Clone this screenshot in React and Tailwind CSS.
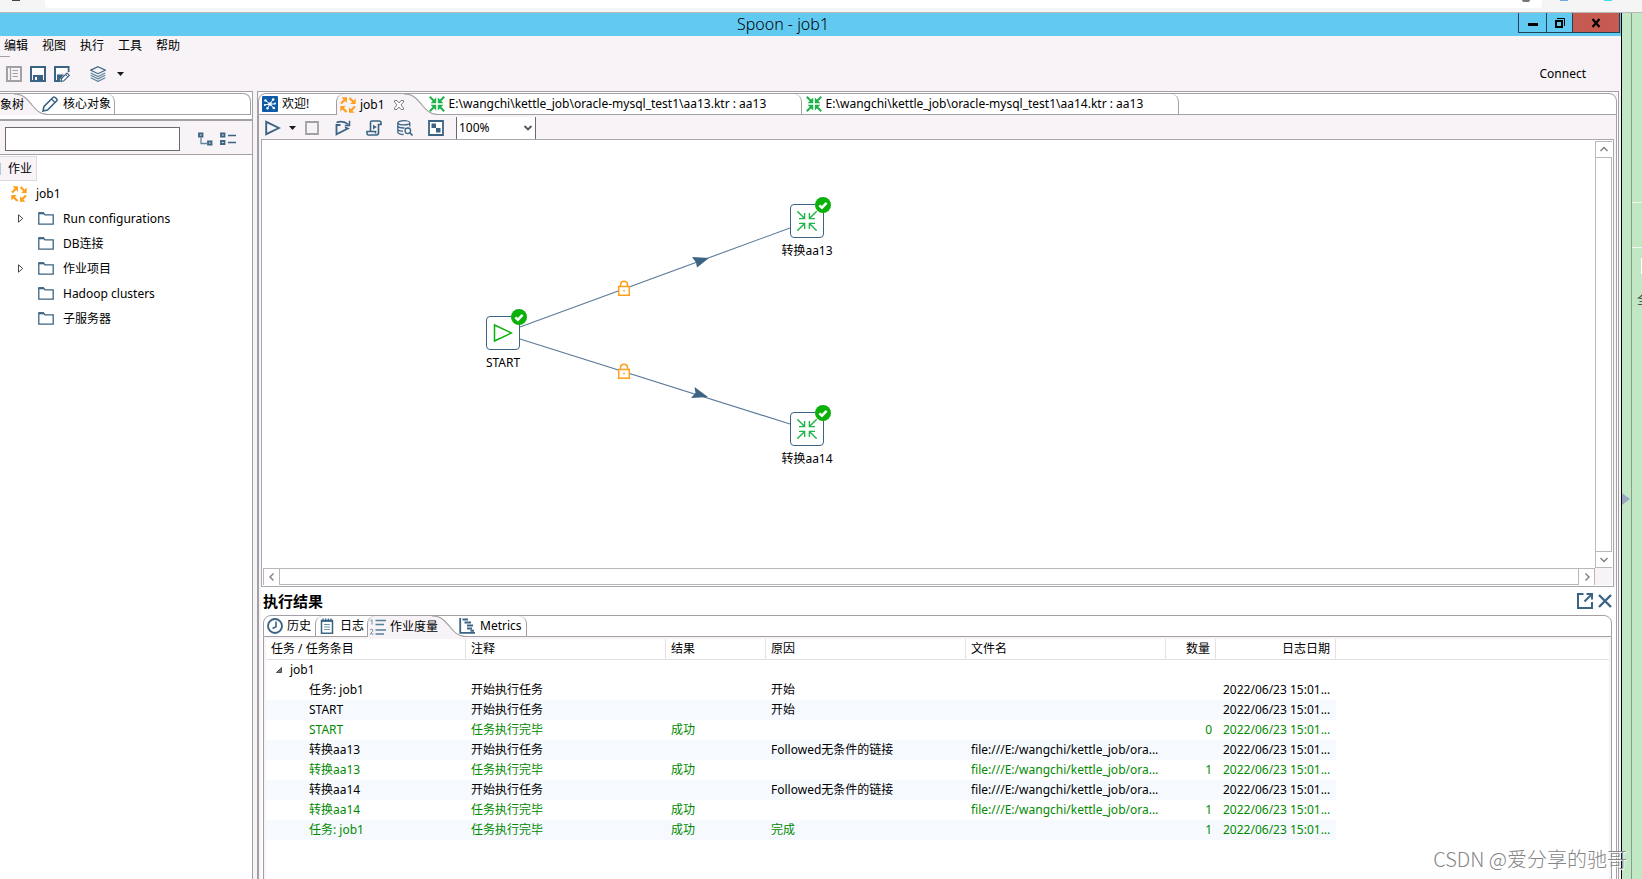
import React from "react";

const BLUE = "#3b6484";
const GREY = "#a2a0a5";

function Icon({ size = 16, children, className = "" }) {
  return (
    <svg
      width={size}
      height={size}
      viewBox={`0 0 ${size} ${size}`}
      fill="none"
      aria-hidden="true"
      className={`shrink-0 ${className}`}
    >
      {children}
    </svg>
  );
}

const quarterTurns = [0, 90, 180, 270];

function JobIcon() {
  return (
    <Icon>
      {quarterTurns.map((a) => (
        <g key={a} transform={`rotate(${a} 8 8)`}>
          <path d="M1 6.5L4.8 2.7" stroke="#ff9f1c" strokeWidth="2.2" />
          <path d="M1.5 0.3H7V5.8Z" fill="#ff9f1c" />
        </g>
      ))}
    </Icon>
  );
}

function TransIcon() {
  return (
    <Icon>
      {quarterTurns.map((a) => (
        <g key={a} transform={`rotate(${a} 8 8)`}>
          <path d="M0.8 0.8L5 5" stroke="#1fb24a" strokeWidth="2" />
          <path d="M7.2 1.5V7.2H1.5Z" fill="#1fb24a" />
        </g>
      ))}
    </Icon>
  );
}

function WelcomeIcon() {
  return (
    <Icon>
      <rect width="16" height="16" rx="1" fill="#0d5ba6" />
      <path d="M8 8L3.5 4.5M8 8L11 3.5M8 8L13 8M8 8L11.5 12M8 8L5.5 12M8 8L3 8.8" stroke="#fff" strokeWidth="1" />
      <g fill="#fff">
        <circle cx="8" cy="8" r="1.8" />
        <circle cx="3.5" cy="4.5" r="1.2" />
        <circle cx="11.2" cy="3.5" r="1.3" />
        <circle cx="13" cy="7.5" r="1" />
        <circle cx="11.8" cy="12" r="1.3" />
        <circle cx="5.5" cy="12.2" r="1.2" />
        <circle cx="2.8" cy="9" r="1" />
      </g>
    </Icon>
  );
}

const ExploreIcon = () => (
  <Icon>
    <path d="M1 1H15V15H1Z" stroke={GREY} strokeWidth="2" />
    <path d="M6.5 4.5H12M6.5 7.5H12M6.5 10.5H12M4.5 2V14" stroke={GREY} strokeWidth="1.2" />
  </Icon>
);

const SaveIcon = () => (
  <Icon>
    <path d="M1 1H15V15H1Z" stroke={BLUE} strokeWidth="2" />
    <path d="M2 2H14V8.5H2Z" fill="#fff" />
    <path d="M3 9H13V15H3Z" fill={BLUE} />
    <path d="M5 11H7V14H5Z" fill="#fff" />
  </Icon>
);

const SaveAsIcon = () => (
  <Icon>
    <path d="M14.5 6V1H1V15H6" stroke={BLUE} strokeWidth="2" />
    <path d="M2 2H13.5V7H2Z" fill="#fff" />
    <path d="M3 8.5H10L5 14.5H3Z" fill={BLUE} />
    <path d="M7.5 12.5L13 7L15.3 9.3L9.8 14.8L6.8 15.5Z" fill="#fff" stroke={BLUE} strokeWidth="1.2" />
    <path d="M11.5 8.5L13.8 10.8" stroke={BLUE} />
  </Icon>
);

const LayersIcon = () => (
  <Icon>
    <path d="M8 0.7L15.3 4.2L8 7.7L0.7 4.2Z" stroke={BLUE} strokeWidth="1.2" />
    <path d="M0.7 7L8 10.6L15.3 7M0.7 9.3L8 12.9L15.3 9.3M0.7 11.8L8 15.4L15.3 11.8" stroke="#6288a0" strokeWidth="1.2" />
  </Icon>
);

const PencilIcon = () => (
  <Icon>
    <path d="M1 15L2 10.5L11 1.5Q12 0.5 13.2 1.5L14.5 2.8Q15.5 4 14.5 5L5.5 14Z" fill="#fff" stroke={BLUE} strokeWidth="1.6" />
    <path d="M9.5 3L13 6.5" stroke={BLUE} strokeWidth="1.2" />
  </Icon>
);

const TreeExpandIcon = () => (
  <Icon>
    <path d="M1 2.5H4.5V5.5H1ZM10 10.5H13.5V13.5H10Z" stroke={BLUE} strokeWidth="1.8" />
    <path d="M3 6.5V12.5H9.5" stroke="#6288a0" strokeWidth="1.3" />
  </Icon>
);

const TreeCollapseIcon = () => (
  <Icon>
    <path d="M1 2.5H4.5V5.5H1ZM1 10H4.5V13H1Z" stroke={BLUE} strokeWidth="1.8" />
    <path d="M8 4.5H16M8 11.5H16" stroke={BLUE} strokeWidth="1.5" />
  </Icon>
);

const FolderIcon = () => (
  <Icon>
    <path d="M0.8 13.2V1.8H5.5L7 3.8H15.2V13.2Z" stroke={BLUE} strokeWidth="1.3" />
    <path d="M0.8 2.3H6" stroke={BLUE} strokeWidth="2" />
  </Icon>
);

const RunIcon = () => (
  <Icon>
    <path d="M1.2 1.8V14.2L14 8Z" stroke={BLUE} strokeWidth="1.9" />
  </Icon>
);

const StopIcon = () => (
  <Icon>
    <path d="M2 2H14V14H2Z" stroke={GREY} strokeWidth="1.8" />
  </Icon>
);

const ReplayIcon = () => (
  <Icon>
    <path d="M5.5 5H1.5V14.2L12.8 8.6L10 7.2" stroke={BLUE} strokeWidth="1.8" />
    <path d="M1.5 2.5Q8 0 13.5 4.5" stroke={BLUE} strokeWidth="1.6" />
    <path d="M14.5 0.8V5.4H9.8" stroke={BLUE} strokeWidth="1.5" />
  </Icon>
);

const ScriptIcon = () => (
  <Icon>
    <path d="M4.5 11V2.5Q4.5 1 6 1H13Q15 1 15 3V4.5H12.5V12.5Q12.5 15 10.5 15H2.5Q1 15 1 13V11.5H9.5V13.5" stroke={BLUE} strokeWidth="1.6" />
    <path d="M7 4.8V9.4L10.8 7.1Z" fill={BLUE} />
  </Icon>
);

const DbSearchIcon = () => (
  <Icon>
    <ellipse cx="6.8" cy="2.8" rx="6" ry="2.1" stroke={BLUE} strokeWidth="1.3" />
    <path d="M0.8 3V12.5Q2 14.5 6.5 14.5M12.8 3V6.5M0.8 6.5Q2.5 8.2 7.5 8M0.8 9.8Q2.5 11.3 6 11.2" stroke={BLUE} strokeWidth="1.3" />
    <circle cx="10.8" cy="10.8" r="2.8" stroke={BLUE} strokeWidth="1.3" />
    <path d="M12.8 12.8L15.5 15.5" stroke={BLUE} strokeWidth="1.6" />
  </Icon>
);

const ResultsIcon = () => (
  <Icon>
    <path d="M1 1H15V15H1Z" fill="#fff" stroke={BLUE} strokeWidth="1.8" />
    <path d="M3.5 3.5H8V8H3.5ZM8 8H12.5V12.5H8Z" fill={BLUE} />
  </Icon>
);

const HistoryIcon = () => (
  <Icon>
    <circle cx="8" cy="8" r="7" stroke={BLUE} strokeWidth="1.9" />
    <path d="M9 3.5V8.8L5.5 10.5" stroke={BLUE} strokeWidth="1.6" />
  </Icon>
);

const LogIcon = () => (
  <Icon>
    <path d="M2.5 2.5H13.5V15.2H2.5Z" fill="#fff" stroke={BLUE} strokeWidth="1.5" />
    <path d="M2.5 3H13.5M4 0.5V4M6.7 0.5V4M9.4 0.5V4M12 0.5V4" stroke={BLUE} strokeWidth="1.3" />
    <path d="M5 6.5H11M5 9H11M5 11.5H11" stroke="#6d90a8" strokeWidth="1.1" />
  </Icon>
);

const MetricsListIcon = () => (
  <Icon>
    <path d="M5.5 1.5H16M5.5 5.5H14M5.5 11H16M5.5 15H14" stroke="#55809b" strokeWidth="1.4" />
    <path d="M0.5 1.5L2 0.8V5.5M0 10.8Q1.5 9.5 2.8 10.8Q3.2 12 0.3 15H3.5" stroke="#6d90a8" />
  </Icon>
);

const GanttIcon = () => (
  <Icon>
    <path d="M1.2 0V14.8H16" stroke={BLUE} strokeWidth="1.8" />
    <path d="M3.5 1.5H9M5.5 4.5H12M8 7.5H14M8 10.5H13M11.5 12.8H15" stroke={BLUE} strokeWidth="2" />
  </Icon>
);

const CloseTabIcon = () => (
  <Icon size={10}>
    <path d="M0.5 0.5H3L5 3L7 0.5H9.5V2L7 5L9.5 8V9.5H7L5 7L3 9.5H0.5V8L3 5L0.5 2Z" fill="#fff" stroke="#77757a" strokeWidth="0.9" />
  </Icon>
);

const OpenExternalIcon = () => (
  <Icon>
    <path d="M6.5 1H1V15H15V9" stroke={BLUE} strokeWidth="2" />
    <path d="M7.5 8.5L14.5 1.5M9.5 1H15V6.5" stroke={BLUE} strokeWidth="2" />
  </Icon>
);

const CloseIcon = () => (
  <Icon size={14}>
    <path d="M1 1L13 13M13 1L1 13" stroke={BLUE} strokeWidth="2.4" />
  </Icon>
);

const DropArrow = () => (
  <svg width="7" height="4" viewBox="0 0 7 4" aria-hidden="true" className="shrink-0">
    <path d="M0 0H7L3.5 4Z" fill="#1a1a1a" />
  </svg>
);

const chevrons = {
  up: "M1.5 6L5 2.5L8.5 6",
  down: "M1.5 3L5 6.5L8.5 3",
  left: "M6.5 1.5L3 5L6.5 8.5",
  right: "M3.5 1.5L7 5L3.5 8.5",
};

function Chevron({ dir, color = "#7f7d80", width = 1.4 }) {
  return (
    <Icon size={10}>
      <path d={chevrons[dir]} stroke={color} strokeWidth={width} />
    </Icon>
  );
}

/* Slanted right edge of the active tab */
function TabSlope() {
  return (
    <svg width="34" height="21" viewBox="0 0 34 21" aria-hidden="true" className="-mb-px h-[21px] w-[34px] shrink-0">
      <path d="M0 0C10 0 14 6 18 11S26 20.5 34 20.5V21H0Z" fill="#f7f3f7" />
      <path d="M0 0C10 0 14 6 18 11S26 20.5 34 20.5" fill="none" stroke="#a2a0a5" strokeWidth="1.2" />
    </svg>
  );
}

function ScrollButton({ dir, className }) {
  return (
    <button
      type="button"
      aria-label={`Scroll ${dir}`}
      className={`flex size-4 shrink-0 items-center justify-center border-[#b9b7ba] bg-white ${className}`}
    >
      <Chevron dir={dir} />
    </button>
  );
}

function TitleBar() {
  return (
    <header className="flex h-[23px] items-start bg-[#62caf1]">
      <h1 className="flex-1 pl-12 text-center text-[16px] leading-[23px] font-light">Spoon - job1</h1>
      <div className="mr-px flex h-5 border border-t-0 border-[#20445c]">
        <button type="button" aria-label="Minimize" className="flex w-7 items-center justify-center border-r border-[#20445c]">
          <span className="mt-1 h-[3px] w-[10px] bg-black" />
        </button>
        <button type="button" aria-label="Restore" className="flex w-[26px] items-center justify-center border-r border-[#20445c]">
          <Icon size={10}>
            <path d="M1 3H7V9H1Z" stroke="#000" strokeWidth="2" />
            <path d="M2 0.5H9.5V8" stroke="#000" />
          </Icon>
        </button>
        <button type="button" aria-label="Close" className="flex w-[46px] items-center justify-center bg-[#c75b52]">
          <Icon size={10}>
            <path d="M1.5 1L8.5 9M8.5 1L1.5 9" stroke="#000" strokeWidth="2.2" />
          </Icon>
        </button>
      </div>
    </header>
  );
}

const menus = ["编辑", "视图", "执行", "工具", "帮助"];

function IconButton({ label, children }) {
  return (
    <button type="button" aria-label={label} className="flex items-center">
      {children}
    </button>
  );
}

function TopTools() {
  return (
    <div className="flex h-[55px] flex-col">
      <nav className="flex h-5 items-center gap-[14px] pl-1">
        {menus.map((m) => (
          <button key={m} type="button">
            {m}
          </button>
        ))}
      </nav>
      <div className="w-[10px] border-t border-[#a2a0a5]" />
      <div className="flex h-[33px] items-center pl-[6px]">
        <div className="flex gap-2">
          <IconButton label="Explore"><ExploreIcon /></IconButton>
          <IconButton label="Save"><SaveIcon /></IconButton>
          <IconButton label="Save as"><SaveAsIcon /></IconButton>
        </div>
        <div className="ml-5 flex items-center gap-[11px]">
          <IconButton label="Perspective"><LayersIcon /></IconButton>
          <IconButton label="Perspective list"><DropArrow /></IconButton>
        </div>
        <button type="button" className="mr-[35px] ml-auto">Connect</button>
      </div>
    </div>
  );
}

const folders = [
  { name: "Run configurations", open: true },
  { name: "DB连接" },
  { name: "作业项目", open: true },
  { name: "Hadoop clusters" },
  { name: "子服务器" },
];

function Sidebar() {
  return (
    <aside className="flex w-[253px] shrink-0 flex-col border-t border-r border-[#a2a0a5] bg-white">
      <div className="mt-px mr-px flex h-[22px] shrink-0 items-center rounded-tr-lg border-y border-r border-[#a2a0a5]">
        <button type="button" className="-mb-px h-[21px] w-[14px] shrink-0 bg-[#f7f3f7] text-left leading-[21px] whitespace-nowrap">
          <span className="relative z-10">象树</span>
        </button>
        <div className="-mr-[15px] flex self-start"><TabSlope /></div>
        <button type="button" className="z-10 flex h-full items-center gap-[5px] rounded-tr-lg border-r border-[#a2a0a5] pr-[3px] pl-[9px]">
          <PencilIcon />
          核心对象
        </button>
      </div>
      <div className="mt-[4px] h-[2px] shrink-0 bg-[#a2a0a5]" />
      <div className="flex h-[34px] shrink-0 items-center border-b border-[#a2a0a5] bg-[#f7f3f7] pt-[2px] pr-4 pl-[5px]">
        <input aria-label="Search" className="h-6 w-[175px] border border-[#6c6a6e] bg-white px-1 outline-none" />
        <div className="ml-auto flex gap-[6px]">
          <IconButton label="Expand all"><TreeExpandIcon /></IconButton>
          <IconButton label="Collapse all"><TreeCollapseIcon /></IconButton>
        </div>
      </div>
      <div className="mt-px flex h-[25px] w-[37px] shrink-0 items-center border border-l-0 border-[#dedade] bg-[#f7f3f7]">
        <span className="h-3 w-px bg-[#b9c8d6]" />
        <span className="ml-[7px]">作业</span>
      </div>
      <ul className="flex flex-col">
        <li className="flex h-[25px] items-center gap-[9px] pl-[11px]">
          <JobIcon />
          job1
        </li>
        {folders.map((f) => (
          <li key={f.name} className="flex h-[25px] items-center pl-[18px]">
            <svg width="6" height="9" viewBox="0 0 6 9" fill="none" aria-hidden="true" className="mr-[14px]">
              {f.open && <path d="M0.5 0.8V8.2L4.7 4.5Z" stroke="#333" strokeWidth="0.9" />}
            </svg>
            <FolderIcon />
            <span className="ml-[9px]">{f.name}</span>
          </li>
        ))}
      </ul>
    </aside>
  );
}

function FileTab({ label }) {
  return (
    <button type="button" className="flex h-full min-w-[377px] items-center gap-1 rounded-tr-lg border-r border-[#a2a0a5] pr-4 pl-1 whitespace-nowrap">
      <TransIcon />
      {label}
    </button>
  );
}

function EditorTabs() {
  return (
    <div className="flex h-[22px] shrink-0 rounded-t-lg border border-[#a2a0a5] bg-white">
      <button type="button" className="flex w-[77px] items-center gap-1 pl-[3px]">
        <WelcomeIcon />
        欢迎!
      </button>
      <div className="-mb-px flex h-[21px] items-center rounded-tl-lg border-l border-[#a2a0a5] bg-[#f7f3f7] pl-[3px]">
        <button type="button" className="flex items-center gap-1">
          <JobIcon />
          job1
        </button>
        <button type="button" aria-label="Close job1" className="ml-[9px]"><CloseTabIcon /></button>
      </div>
      <TabSlope />
      <div className="-ml-[13px] flex">
        <FileTab label="E:\wangchi\kettle_job\oracle-mysql_test1\aa13.ktr : aa13" />
        <FileTab label="E:\wangchi\kettle_job\oracle-mysql_test1\aa14.ktr : aa13" />
      </div>
    </div>
  );
}

function EditorToolbar() {
  return (
    <div className="flex h-6 shrink-0 items-center pt-px pl-[6px]">
      <div className="flex items-center gap-2">
        <IconButton label="Run"><RunIcon /></IconButton>
        <IconButton label="Run options"><DropArrow /></IconButton>
        <IconButton label="Stop"><StopIcon /></IconButton>
      </div>
      <div className="ml-[15px] flex items-center gap-[15px]">
        <IconButton label="Replay"><ReplayIcon /></IconButton>
        <IconButton label="SQL script"><ScriptIcon /></IconButton>
        <IconButton label="Explore database"><DbSearchIcon /></IconButton>
        <IconButton label="Show results"><ResultsIcon /></IconButton>
      </div>
      <div className="ml-3 grid h-[22px] w-20 items-center self-end border-x border-[#6c6a6e] bg-white">
        <select aria-label="Zoom" defaultValue="100%" className="col-start-1 row-start-1 h-full w-full appearance-none bg-transparent pl-[2px] outline-none">
          <option>100%</option>
        </select>
        <span className="pointer-events-none col-start-1 row-start-1 mr-[2px] justify-self-end">
          <Chevron dir="down" color="#555" width={1.8} />
        </span>
      </div>
    </div>
  );
}

function StatusBadge() {
  return (
    <span className="absolute -top-2 -right-2">
      <Icon size={16}>
        <circle cx="8" cy="8" r="8" fill="#0bb00b" />
        <path d="M4.3 8.3L6.9 10.7L11.6 5.8" stroke="#fff" strokeWidth="2.4" />
      </Icon>
    </span>
  );
}

function Node({ label, place, children }) {
  return (
    <div className={`absolute flex w-[34px] flex-col items-center ${place}`}>
      <div className="relative flex size-[34px] items-center justify-center rounded border border-[#3b6484] bg-white">
        {children}
        <StatusBadge />
      </div>
      <span className="mt-[5px] leading-4 whitespace-nowrap">{label}</span>
    </div>
  );
}

function TransNodeArt() {
  return (
    <Icon size={20}>
      {quarterTurns.map((a) => (
        <path key={a} transform={`rotate(${a} 10 10)`} d="M0.3 0.3L7.6 7.6M7.6 2V7.6H2" stroke="#1fb24a" strokeWidth="1.4" />
      ))}
    </Icon>
  );
}

function Lock({ x, y }) {
  return (
    <g transform={`translate(${x} ${y})`} stroke="#ff9f1c" strokeWidth="1.5">
      <path d="M2.5 6V4A3.6 3.6 0 0 1 9.5 4V6" fill="#fff" />
      <path d="M0.7 6.5H11.3V15.3H0.7Z" fill="#fff" />
      <path d="M5.2 10.8H6.8" strokeWidth="1.6" />
    </g>
  );
}

function Canvas() {
  return (
    <div className="relative h-[427px] min-w-0 flex-1 overflow-hidden bg-white">
      <svg width="600" height="427" viewBox="0 0 600 427" aria-hidden="true" className="absolute top-0 left-0">
        <g fill="none" stroke="#5a7a9a" strokeWidth="1.1">
          <path d="M258 186L528 87" />
          <path d="M258 198L528 283" />
        </g>
        <path d="M430 116L447 117L435 126.500L434 121.500Z" fill={BLUE} />
        <path d="M432.500 246L446 256L429 257L433.500 252Z" fill={BLUE} />
        <Lock x={356} y={139} />
        <Lock x={356} y={222} />
      </svg>
      <Node label="START" place="top-[175px] left-[224px]">
        <Icon size={20}>
          <path d="M1.5 2V18L18.5 10Z" stroke="#0bb00b" strokeWidth="1.5" />
        </Icon>
      </Node>
      <Node label="转换aa13" place="top-[63px] left-[528px]">
        <TransNodeArt />
      </Node>
      <Node label="转换aa14" place="top-[271px] left-[528px]">
        <TransNodeArt />
      </Node>
    </div>
  );
}

function CanvasFrame() {
  return (
    <div className="mx-[2px] flex shrink-0 flex-col border border-[#a9a7b0] bg-white pt-px pr-px pb-px">
      <div className="flex">
        <Canvas />
        <div className="flex w-[17px] flex-col justify-between border border-[#b9b7ba]">
          <ScrollButton dir="up" className="border-b" />
          <ScrollButton dir="down" className="border-t" />
        </div>
      </div>
      <div className="flex">
        <div className="ml-px flex h-[17px] flex-1 justify-between border border-[#b9b7ba]">
          <ScrollButton dir="left" className="border-r" />
          <ScrollButton dir="right" className="border-l" />
        </div>
        <div className="w-[17px] bg-[#f7f3f7]" />
      </div>
    </div>
  );
}

const DATE = "2022/06/23 15:01...";
const FILE = "file:///E:/wangchi/kettle_job/ora...";
const rows = [
  ["任务: job1", "开始执行任务", "", "开始", "", ""],
  ["START", "开始执行任务", "", "开始", "", ""],
  ["START", "任务执行完毕", "成功", "", "", "0"],
  ["转换aa13", "开始执行任务", "", "Followed无条件的链接", FILE, ""],
  ["转换aa13", "任务执行完毕", "成功", "", FILE, "1"],
  ["转换aa14", "开始执行任务", "", "Followed无条件的链接", FILE, ""],
  ["转换aa14", "任务执行完毕", "成功", "", FILE, "1"],
  ["任务: job1", "任务执行完毕", "成功", "完成", "", "1"],
];

const headers = ["任务 / 任务条目", "注释", "结果", "原因", "文件名", "数量", "日志日期"];

function ResultTable() {
  return (
    <table className="w-full table-fixed border-separate border-spacing-0 bg-white text-left">
      <colgroup>
        <col className="w-[200px]" />
        <col className="w-[200px]" />
        <col className="w-[100px]" />
        <col className="w-[200px]" />
        <col className="w-[200px]" />
        <col className="w-[50px]" />
        <col className="w-[120px]" />
        <col />
      </colgroup>
      <thead>
        <tr className="h-[21px]">
          {headers.map((h, i) => (
            <th
              key={h}
              scope="col"
              className={`border-r border-b border-[#e4e0e4] py-0 pr-[5px] pl-[5px] font-normal ${i > 4 ? "text-right" : ""}`}
            >
              {h}
            </th>
          ))}
          <td className="border-b border-[#e4e0e4] p-0" />
        </tr>
      </thead>
      <tbody>
        <tr className="h-5">
          <td className="py-0 pl-[10px]" colSpan={8}>
            <span className="flex items-center gap-2">
              <svg width="6" height="6" viewBox="0 0 6 6" aria-hidden="true">
                <path d="M5.5 0.5V5.5H0.5Z" fill="#777" stroke="#333" strokeWidth="0.8" />
              </svg>
              job1
            </span>
          </td>
        </tr>
        {rows.map((r, i) => {
          const stripe = i % 2 === 1 ? "bg-[#f6faff]" : "";
          return (
            <tr key={i} className={`h-5 whitespace-nowrap ${r[2] ? "text-[#008a00]" : "text-black"}`}>
              <td className={`py-0 pr-0 pl-[43px] ${stripe}`}>{r[0]}</td>
              {r.slice(1, 5).map((c, j) => (
                <td key={j} className={`py-0 pr-0 pl-[5px] ${stripe}`}>
                  {c}
                </td>
              ))}
              <td className={`py-0 pr-1 pl-0 text-right ${stripe}`}>{r[5]}</td>
              <td className={`py-0 pr-0 pl-[7px] ${stripe}`}>{DATE}</td>
              <td />
            </tr>
          );
        })}
      </tbody>
    </table>
  );
}

function Results() {
  return (
    <section className="ml-[2px] flex flex-1 flex-col bg-white pr-[4px] pl-[2px]">
      <div className="flex h-7 items-center">
        <h2 className="text-[15px] leading-5 font-bold">执行结果</h2>
        <div className="ml-auto flex items-center gap-[5px]">
          <IconButton label="Open in window"><OpenExternalIcon /></IconButton>
          <IconButton label="Close results"><CloseIcon /></IconButton>
        </div>
      </div>
      <div className="flex h-[22px] shrink-0 rounded-t-lg border border-[#a2a0a5] bg-white">
        <button type="button" className="flex w-[51px] items-center gap-1 pl-[3px] whitespace-nowrap">
          <HistoryIcon />
          历史
        </button>
        <button type="button" className="flex w-[52px] items-center gap-[5px] rounded-tl-lg border-l border-[#a2a0a5] pl-[3px] whitespace-nowrap">
          <LogIcon />
          日志
        </button>
        <button type="button" className="-mb-px flex h-[21px] w-[65px] items-center gap-1 rounded-tl-lg border-l border-[#a2a0a5] bg-[#f7f3f7] pl-[2px] whitespace-nowrap">
          <MetricsListIcon />
          <span className="z-10">作业度量</span>
        </button>
        <TabSlope />
        <button type="button" className="-ml-[7px] flex items-center gap-[5px] rounded-tr-lg border-r border-[#a2a0a5] pr-1">
          <GanttIcon />
          Metrics
        </button>
      </div>
      <div className="flex-1 border-x border-[#a2a0a5] bg-[#f7f3f7] px-[2px] pt-[2px]">
        <div className="h-full bg-white">
          <ResultTable />
        </div>
      </div>
    </section>
  );
}

function Editor() {
  return (
    <main className="mr-[2px] flex min-w-0 flex-1 flex-col border-x border-t border-[#a2a0a5] bg-white pt-px pr-px">
      <div className="flex flex-1 flex-col bg-[#f7f3f7]">
        <EditorTabs />
        <div className="flex flex-1 flex-col border-x border-[#a2a0a5]">
          <EditorToolbar />
          <CanvasFrame />
          <Results />
        </div>
      </div>
    </main>
  );
}

function BrowserStrip() {
  return (
    <div className="flex h-[13px] items-start justify-between border-b border-[#b9b9b9] bg-[#f5f5f5]">
      <div className="ml-3 h-px w-2 bg-[#444]" />
      <div className="mr-[18px] ml-[25px] flex h-2 flex-1 justify-end rounded-b bg-white pr-3">
        <span className="h-[2px] w-2 rounded-b-full bg-[#777]" />
      </div>
      <div className="flex gap-9 pr-[30px]">
        <span className="h-px w-2 bg-[#6fa8dc]" />
        <span className="h-px w-2 bg-[#3fdce6]" />
      </div>
    </div>
  );
}

function EdgeRail() {
  return (
    <div className="flex w-5 shrink-0 bg-[#c2e7c5]">
      <div className="flex w-[10px] justify-start border-r border-[#84a087] pt-[480px]">
        <svg width="8" height="12" viewBox="0 0 8 12" aria-hidden="true">
          <path d="M0 0L8 6L0 12Z" fill="#9aa8c4" />
        </svg>
      </div>
      <div className="flex flex-1 flex-col overflow-hidden pt-[189px]">
        <div className="h-[46px] shrink-0 border-y border-[#eef8ee]" />
        <div className="mt-[10px] h-4 w-px shrink-0 self-end bg-white" />
        <span className="mt-[18px] ml-[5px] text-[12px] leading-4 text-[#333]">全</span>
      </div>
    </div>
  );
}

export default function App() {
  return (
    <div className="relative flex min-h-screen flex-col overflow-hidden bg-[#f7f3f7] font-['Noto_Sans','Noto_Sans_CJK_SC',sans-serif] text-[12px] leading-4 text-black">
      <BrowserStrip />
      <div className="flex flex-1">
        <div className="flex min-w-0 flex-1 flex-col border-r border-black">
          <TitleBar />
          <TopTools />
          <div className="flex flex-1 gap-1">
            <Sidebar />
            <Editor />
          </div>
        </div>
        <EdgeRail />
      </div>
      <p className="absolute right-[15px] bottom-[5px] font-['Noto_Sans_CJK_SC',sans-serif] text-[20px] leading-[30px] font-light text-[#858585] [text-shadow:1px_1px_1px_#fff]">
        CSDN @爱分享的驰哥
      </p>
    </div>
  );
}
